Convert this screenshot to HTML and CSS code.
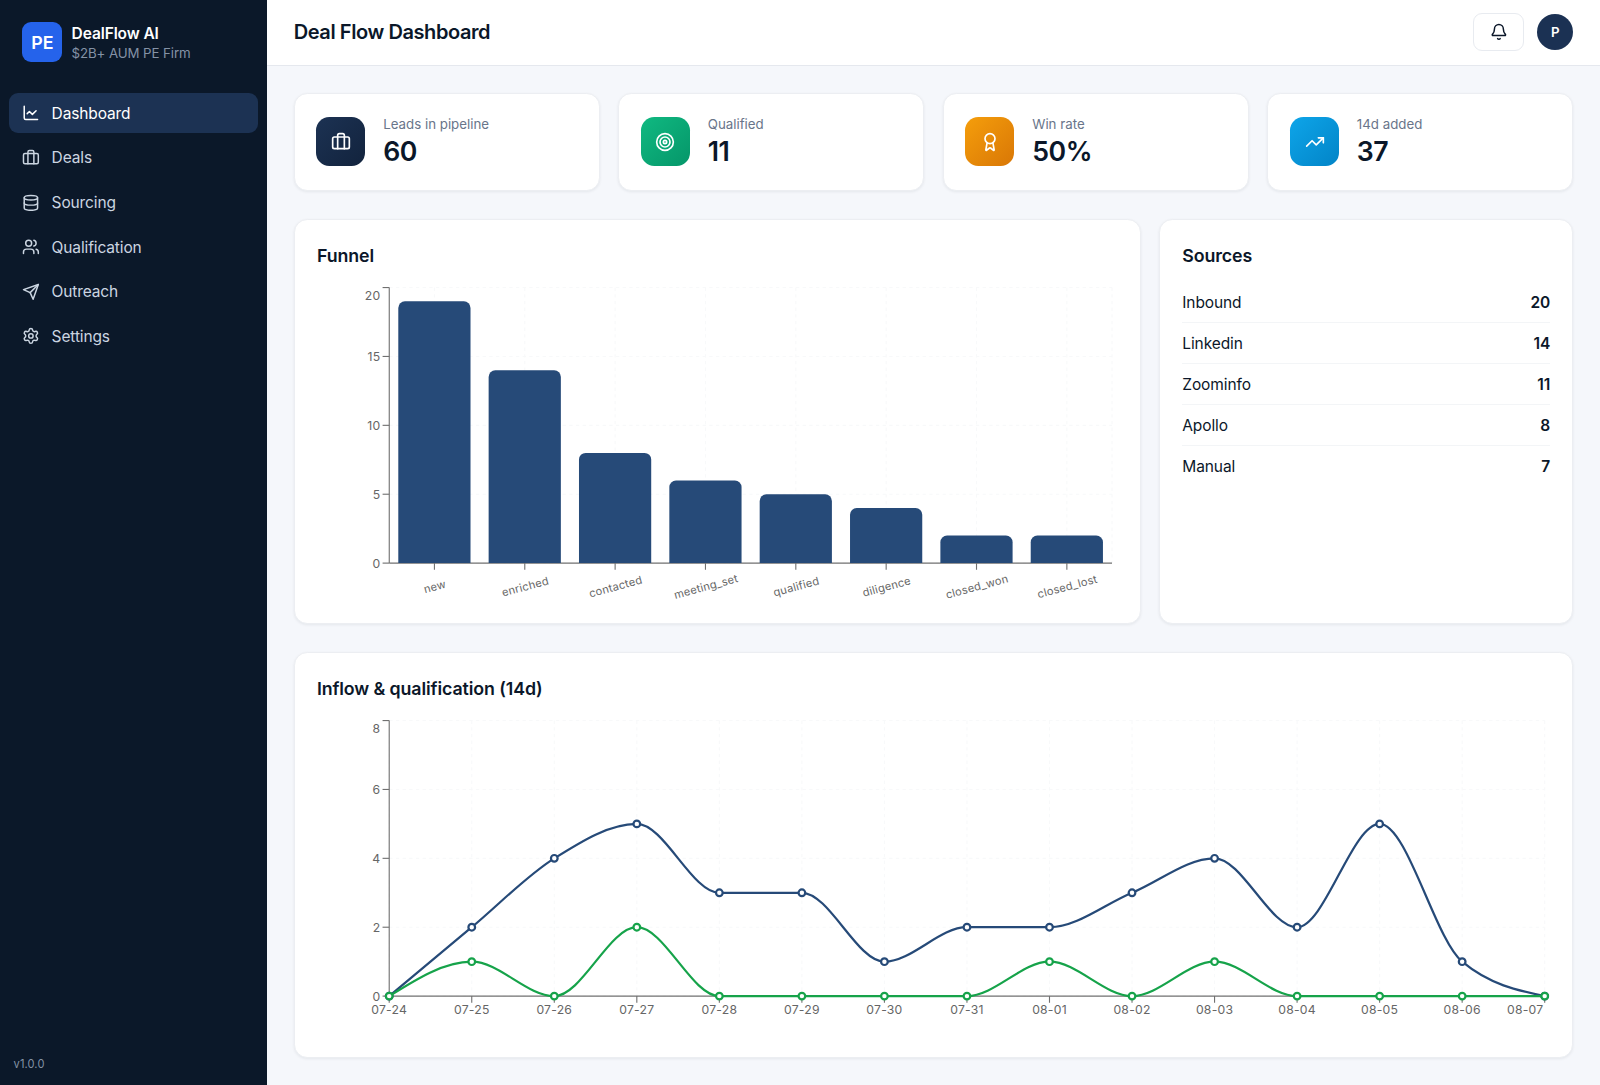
FILE: index.html
```
<!DOCTYPE html>
<html lang="en">
<head>
    <meta charset="UTF-8">
    <meta name="viewport" content="width=device-width, initial-scale=1.0">
    <title>DealFlow AI</title>
    <link rel="stylesheet" href="styles.css">
</head>
<body>
    <div class="layout">
        <aside class="sidebar">
            <div class="brand">
                <div class="logo">PE</div>
                <div>
                    <div class="brand-name">DealFlow AI</div>
                    <div class="brand-sub">$2B+ AUM PE Firm</div>
                </div>
            </div>
            <nav class="nav">
                <a class="nav-item active">
                    <svg class="icon" viewBox="0 0 24 24"><path d="M3 3v16a2 2 0 0 0 2 2h16"/><path d="m19 9-5 5-4-4-3 3"/></svg>
                    Dashboard
                </a>
                <a class="nav-item">
                    <svg class="icon" viewBox="0 0 24 24"><path d="M16 20V4a2 2 0 0 0-2-2h-4a2 2 0 0 0-2 2v16"/><rect width="20" height="14" x="2" y="6" rx="2"/></svg>
                    Deals
                </a>
                <a class="nav-item">
                    <svg class="icon" viewBox="0 0 24 24"><ellipse cx="12" cy="5" rx="9" ry="3"/><path d="M3 5V19A9 3 0 0 0 21 19V5"/><path d="M3 12A9 3 0 0 0 21 12"/></svg>
                    Sourcing
                </a>
                <a class="nav-item">
                    <svg class="icon" viewBox="0 0 24 24"><path d="M16 21v-2a4 4 0 0 0-4-4H6a4 4 0 0 0-4 4v2"/><circle cx="9" cy="7" r="4"/><path d="M22 21v-2a4 4 0 0 0-3-3.87"/><path d="M16 3.13a4 4 0 0 1 0 7.75"/></svg>
                    Qualification
                </a>
                <a class="nav-item">
                    <svg class="icon" viewBox="0 0 24 24"><path d="m22 2-7 20-4-9-9-4Z"/><path d="M22 2 11 13"/></svg>
                    Outreach
                </a>
                <a class="nav-item">
                    <svg class="icon" viewBox="0 0 24 24"><path d="M9.671 4.136a2.34 2.34 0 0 1 4.659 0 2.34 2.34 0 0 0 3.319 1.915 2.34 2.34 0 0 1 2.33 4.033 2.34 2.34 0 0 0 0 3.831 2.34 2.34 0 0 1-2.33 4.033 2.34 2.34 0 0 0-3.319 1.915 2.34 2.34 0 0 1-4.659 0 2.34 2.34 0 0 0-3.32-1.915 2.34 2.34 0 0 1-2.33-4.033 2.34 2.34 0 0 0 0-3.831A2.34 2.34 0 0 1 6.35 6.051a2.34 2.34 0 0 0 3.319-1.915"/><circle cx="12" cy="12" r="3"/></svg>
                    Settings
                </a>
            </nav>
            <div class="version">v1.0.0</div>
        </aside>

        <div class="main">
            <header class="topbar">
                <h1>Deal Flow Dashboard</h1>
                <div class="actions">
                    <button class="bell">
                        <svg class="icon" viewBox="0 0 24 24"><path d="M10.268 21a2 2 0 0 0 3.464 0"/><path d="M3.262 15.326A1 1 0 0 0 4 17h16a1 1 0 0 0 .74-1.673C19.41 13.956 18 12.499 18 8A6 6 0 0 0 6 8c0 4.499-1.411 5.956-2.738 7.326"/></svg>
                    </button>
                    <div class="avatar">P</div>
                </div>
            </header>

            <main class="content">
                <section class="kpis">
                    <div class="card kpi">
                        <div class="kpi-icon navy">
                            <svg class="icon" viewBox="0 0 24 24"><path d="M16 20V4a2 2 0 0 0-2-2h-4a2 2 0 0 0-2 2v16"/><rect width="20" height="14" x="2" y="6" rx="2"/></svg>
                        </div>
                        <div>
                            <div class="kpi-label">Leads in pipeline</div>
                            <div class="kpi-value">60</div>
                        </div>
                    </div>
                    <div class="card kpi">
                        <div class="kpi-icon green">
                            <svg class="icon" viewBox="0 0 24 24"><circle cx="12" cy="12" r="10"/><circle cx="12" cy="12" r="6"/><circle cx="12" cy="12" r="2"/></svg>
                        </div>
                        <div>
                            <div class="kpi-label">Qualified</div>
                            <div class="kpi-value">11</div>
                        </div>
                    </div>
                    <div class="card kpi">
                        <div class="kpi-icon amber">
                            <svg class="icon" viewBox="0 0 24 24"><path d="m15.477 12.89 1.515 8.526a.5.5 0 0 1-.81.47l-3.58-2.687a1 1 0 0 0-1.197 0l-3.586 2.686a.5.5 0 0 1-.81-.469l1.514-8.526"/><circle cx="12" cy="8" r="6"/></svg>
                        </div>
                        <div>
                            <div class="kpi-label">Win rate</div>
                            <div class="kpi-value">50%</div>
                        </div>
                    </div>
                    <div class="card kpi">
                        <div class="kpi-icon sky">
                            <svg class="icon" viewBox="0 0 24 24"><path d="M16 7h6v6"/><path d="m22 7-8.5 8.5-5-5L2 17"/></svg>
                        </div>
                        <div>
                            <div class="kpi-label">14d added</div>
                            <div class="kpi-value">37</div>
                        </div>
                    </div>
                </section>

                <section class="row">
                    <div class="card panel">
                        <h2>Funnel</h2>
                        <svg class="chart" id="funnel" viewBox="0 0 720.5 288"></svg>
                    </div>
                    <div class="card panel">
                        <h2>Sources</h2>
                        <ul class="sources">
                            <li><span>Inbound</span><b>20</b></li>
                            <li><span>Linkedin</span><b>14</b></li>
                            <li><span>Zoominfo</span><b>11</b></li>
                            <li><span>Apollo</span><b>8</b></li>
                            <li><span>Manual</span><b>7</b></li>
                        </ul>
                    </div>
                </section>

                <section class="card panel">
                    <h2>Inflow &amp; qualification (14d)</h2>
                    <svg class="chart" id="inflow" viewBox="0 0 1110 288"></svg>
                </section>
            </main>
        </div>
    </div>
    <script src="charts.js"></script>
</body>
</html>
```
FILE: styles.css
```
* {
    box-sizing: border-box;
}
body {
    margin: 0;
    font-family: Inter, "Liberation Sans", sans-serif;
    font-size: 15.5px;
    letter-spacing: -0.1px;
    color: #0b1729;
    background: #f5f7fb;
}
h1, h2, ul {
    margin: 0;
    padding: 0;
}
.layout {
    display: flex;
    height: 1085px;
}
.icon {
    width: 17.8px;
    height: 17.8px;
    flex: none;
    fill: none;
    stroke: currentColor;
    stroke-width: 2;
    stroke-linecap: round;
    stroke-linejoin: round;
}

/* sidebar */
.sidebar {
    width: 267px;
    flex: none;
    display: flex;
    flex-direction: column;
    padding: 22.3px 9px 12.5px;
    background: #0b1829;
    color: #cbd5e1;
}
.brand {
    display: flex;
    align-items: center;
    gap: 9.2px;
    padding-left: 13.4px;
    height: 40px;
}
.logo {
    width: 40px;
    height: 40px;
    border-radius: 9px;
    background: #2563eb;
    color: #fff;
    font-size: 17.8px;
    font-weight: 600;
    line-height: 41px;
    text-align: center;
}
.brand-name {
    color: #fff;
    font-weight: 600;
    line-height: 20px;
    padding-top: 1.4px;
}
.brand-sub {
    color: #8492a6;
    font-size: 13.3px;
    line-height: 19px;
}
.nav {
    display: flex;
    flex-direction: column;
    gap: 4.6px;
    margin-top: 31.1px;
}
.nav-item {
    display: flex;
    align-items: center;
    gap: 11.5px;
    height: 40px;
    padding: 0 13.3px;
    border-radius: 9px;
    letter-spacing: -0.13px;
}
.nav-item.active {
    background: #1c3253;
    color: #fff;
}
.version {
    margin-top: auto;
    padding-left: 4.6px;
    color: #8492a6;
    font-size: 11.1px;
    line-height: 17px;
    letter-spacing: 0.1px;
}

/* top bar */
.main {
    flex: 1;
    min-width: 0;
}
.topbar {
    display: flex;
    align-items: center;
    justify-content: space-between;
    height: 65.6px;
    padding: 0 26.7px 1px;
    background: #fff;
    border-bottom: 1px solid #e5e8ee;
}
h1 {
    font-size: 20px;
    font-weight: 600;
    letter-spacing: -0.42px;
}
.actions {
    display: flex;
    align-items: center;
    gap: 13.3px;
}
.bell {
    display: flex;
    align-items: center;
    justify-content: center;
    width: 51px;
    height: 38px;
    padding: 0;
    background: #fff;
    border: 1px solid #e8ebf0;
    border-radius: 9px;
    color: #0b1729;
}
.avatar {
    width: 36px;
    height: 36px;
    border-radius: 50%;
    background: #1b3153;
    color: #fff;
    font-size: 13.3px;
    font-weight: 600;
    line-height: 36px;
    text-align: center;
}

/* cards */
.content {
    display: flex;
    flex-direction: column;
    gap: 28px;
    padding: 27.1px 26.7px;
}
.card {
    background: #fff;
    border: 1px solid #eceef2;
    border-radius: 13.3px;
    box-shadow: 0 1px 3px rgba(11, 23, 41, 0.07);
}
.kpis {
    display: grid;
    grid-template-columns: repeat(4, 1fr);
    gap: 18.6px;
}
.kpi {
    display: flex;
    align-items: center;
    gap: 17.8px;
    height: 98.6px;
    padding: 0 21.7px;
}
.kpi-icon {
    display: flex;
    align-items: center;
    justify-content: center;
    width: 49px;
    height: 49px;
    border-radius: 13.3px;
    color: #fff;
}
.kpi-icon .icon {
    width: 20px;
    height: 20px;
}
.navy {
    background: linear-gradient(135deg, #1c3253, #12233d);
}
.green {
    background: linear-gradient(135deg, #10b981, #059669);
}
.amber {
    background: linear-gradient(135deg, #f59e0b, #d97706);
}
.sky {
    background: linear-gradient(135deg, #0ea5e9, #0284c7);
}
.kpi-label {
    color: #69758a;
    font-size: 13.3px;
    line-height: 18px;
    letter-spacing: 0;
}
.kpi-value {
    font-size: 26.7px;
    font-weight: 600;
    line-height: 36px;
    letter-spacing: -0.5px;
}
.row {
    display: grid;
    grid-template-columns: 847px 1fr;
    gap: 18.4px;
}
.panel {
    height: 405.2px;
    padding: 21.8px 22.2px;
}
h2 {
    font-size: 17.8px;
    font-weight: 600;
    line-height: 27px;
    margin-bottom: 12.5px;
}
.sources {
    list-style: none;
    padding-top: 0.7px;
}
.sources li {
    display: flex;
    justify-content: space-between;
    align-items: center;
    height: 41px;
    border-bottom: 1px solid #f3f5f7;
}
.sources li:last-child {
    height: 40px;
    border-bottom: none;
}
.sources b {
    font-weight: 600;
}

/* charts */
.chart {
    display: block;
    width: 100%;
    height: 320px;
    overflow: visible;
}
.grid {
    stroke: #f8f9fa;
    stroke-dasharray: 3 3;
}
.axis {
    stroke: #707070;
}
.tick {
    fill: #666;
    font-size: 11px;
    letter-spacing: 0.2px;
}
.tick-slanted {
    font-size: 10px;
}
.bar {
    fill: #264a78;
}
.line {
    fill: none;
    stroke-width: 2;
}
.dot {
    fill: #fff;
    stroke-width: 2;
}
.inflow {
    stroke: #264a78;
}
.qualified {
    stroke: #16a34a;
}
```
FILE: charts.js
```
const TOP = 5;
const BOTTOM = 253;
const LEFT = 65;

function line(cls, x1, y1, x2, y2) {
    return `<line class="${cls}" x1="${x1}" y1="${y1}" x2="${x2}" y2="${y2}"/>`;
}

function yPos(value, max) {
    return BOTTOM - (value / max) * (BOTTOM - TOP);
}

// Dashed grid behind the series
function grid(xs, ticks, max, right) {
    return ticks.map(t => line('grid', LEFT, yPos(t, max), right, yPos(t, max))).join('')
        + xs.map(x => line('grid', x, TOP, x, BOTTOM)).join('');
}

function axes(xs, ticks, max, right) {
    let out = line('axis', LEFT, BOTTOM, right, BOTTOM) + line('axis', LEFT, TOP, LEFT, BOTTOM);
    xs.forEach(x => {
        out += line('axis', x, BOTTOM, x, BOTTOM + 6);
    });
    ticks.forEach(t => {
        const y = yPos(t, max);
        // keep the top label inside the plot
        const labelY = t === max ? y + 11 : y + 4;
        out += line('axis', LEFT - 6, y, LEFT, y);
        out += `<text class="tick" x="57" y="${labelY}" text-anchor="end">${t}</text>`;
    });
    return out;
}

function drawFunnel() {
    const data = [['new', 19], ['enriched', 14], ['contacted', 8], ['meeting_set', 6],
        ['qualified', 5], ['diligence', 4], ['closed_won', 2], ['closed_lost', 2]];
    const right = 715.5;
    const max = 20;
    const ticks = [0, 5, 10, 15, 20];
    const band = (right - LEFT) / data.length;
    const xs = data.map((d, i) => LEFT + band * (i + 0.5));
    let out = grid(xs.concat(right), ticks, max, right);
    out += axes(xs, ticks, max, right);
    data.forEach(([name, value], i) => {
        const x = LEFT + band * (i + 0.1);
        const w = Math.floor(band * 0.8);
        const y = yPos(value, max);
        out += `<path class="bar" d="M${x} ${BOTTOM}V${y + 6}a6 6 0 0 1 6-6h${w - 12}a6 6 0 0 1 6 6V${BOTTOM}z"/>`;
        out += `<text class="tick tick-slanted" text-anchor="middle" transform="translate(${xs[i]} 261) rotate(-15)" x="-3" y="16.3">${name}</text>`;
    });
    document.getElementById('funnel').innerHTML = out;
}

// Monotone cubic curve through the points
function monotone(p) {
    const n = p.length;
    const h = p[1][0] - p[0][0];
    const s = [];
    for (let i = 0; i < n - 1; i++) s.push((p[i + 1][1] - p[i][1]) / h);
    const m = p.map((_, i) => {
        if (i === 0 || i === n - 1) return 0;
        const a = s[i - 1], b = s[i];
        return (Math.sign(a) + Math.sign(b)) * Math.min(Math.abs(a), Math.abs(b), 0.25 * Math.abs(a + b)) || 0;
    });
    m[0] = (3 * s[0] - m[1]) / 2;
    m[n - 1] = (3 * s[n - 2] - m[n - 2]) / 2;
    let d = `M${p[0][0]} ${p[0][1]}`;
    for (let i = 0; i < n - 1; i++) {
        d += `C${p[i][0] + h / 3} ${p[i][1] + m[i] * h / 3} ${p[i + 1][0] - h / 3} ${p[i + 1][1] - m[i + 1] * h / 3} ${p[i + 1][0]} ${p[i + 1][1]}`;
    }
    return d;
}

function drawInflow() {
    const days = ['07-24', '07-25', '07-26', '07-27', '07-28', '07-29', '07-30', '07-31',
        '08-01', '08-02', '08-03', '08-04', '08-05', '08-06', '08-07'];
    const series = {
        inflow: [0, 2, 4, 5, 3, 3, 1, 2, 2, 3, 4, 2, 5, 1, 0],
        qualified: [0, 1, 0, 2, 0, 0, 0, 0, 1, 0, 1, 0, 0, 0, 0]
    };
    const right = 1105;
    const max = 8;
    const ticks = [0, 2, 4, 6, 8];
    const xs = days.map((d, i) => LEFT + (right - LEFT) * i / (days.length - 1));
    let out = grid(xs, ticks, max, right) + axes(xs, ticks, max, right);
    days.forEach((day, i) => {
        // the last label is pulled in from the edge
        const x = i === days.length - 1 ? xs[i] - 17.5 : xs[i];
        out += `<text class="tick" x="${x}" y="269" text-anchor="middle">${day}</text>`;
    });
    for (const name in series) {
        const points = series[name].map((v, i) => [xs[i], yPos(v, max)]);
        out += `<path class="line ${name}" d="${monotone(points)}"/>`;
        points.forEach(p => {
            out += `<circle class="dot ${name}" cx="${p[0]}" cy="${p[1]}" r="3"/>`;
        });
    }
    document.getElementById('inflow').innerHTML = out;
}

drawFunnel();
drawInflow();
```
